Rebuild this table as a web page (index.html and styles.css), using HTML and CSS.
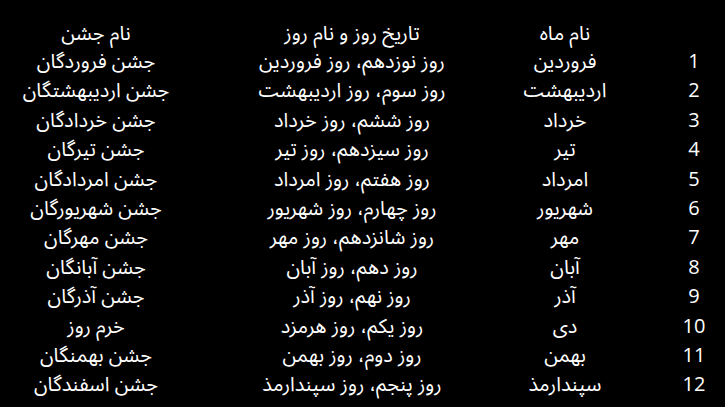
FILE: index.html
```html
<!DOCTYPE html>
<html lang="fa" dir="rtl">
<head>
<meta charset="utf-8">
<link rel="stylesheet" href="styles.css">
</head>
<body>
<div class="table">
  <div class="row head">
    <div class="cell num"></div>
    <div class="cell month">نام ماه</div>
    <div class="cell date">تاریخ روز و نام روز</div>
    <div class="cell fest">نام جشن</div>
  </div>
  <div class="row"><div class="cell num">1</div><div class="cell month">فروردین</div><div class="cell date">روز نوزدهم، روز فروردین</div><div class="cell fest">جشن فروردگان</div></div>
  <div class="row"><div class="cell num">2</div><div class="cell month">اردیبهشت</div><div class="cell date">روز سوم، روز اردیبهشت</div><div class="cell fest">جشن اردیبهشتگان</div></div>
  <div class="row"><div class="cell num">3</div><div class="cell month">خرداد</div><div class="cell date">روز ششم، روز خرداد</div><div class="cell fest">جشن خردادگان</div></div>
  <div class="row"><div class="cell num">4</div><div class="cell month">تیر</div><div class="cell date">روز سیزدهم، روز تیر</div><div class="cell fest">جشن تیرگان</div></div>
  <div class="row"><div class="cell num">5</div><div class="cell month">امرداد</div><div class="cell date">روز هفتم، روز امرداد</div><div class="cell fest">جشن امردادگان</div></div>
  <div class="row"><div class="cell num">6</div><div class="cell month">شهریور</div><div class="cell date">روز چهارم، روز شهریور</div><div class="cell fest">جشن شهریورگان</div></div>
  <div class="row"><div class="cell num">7</div><div class="cell month">مهر</div><div class="cell date">روز شانزدهم، روز مهر</div><div class="cell fest">جشن مهرگان</div></div>
  <div class="row"><div class="cell num">8</div><div class="cell month">آبان</div><div class="cell date">روز دهم، روز آبان</div><div class="cell fest">جشن آبانگان</div></div>
  <div class="row"><div class="cell num">9</div><div class="cell month">آذر</div><div class="cell date">روز نهم، روز آذر</div><div class="cell fest">جشن آذرگان</div></div>
  <div class="row"><div class="cell num">10</div><div class="cell month">دی</div><div class="cell date">روز یکم، روز هرمزد</div><div class="cell fest">خرم روز</div></div>
  <div class="row"><div class="cell num">11</div><div class="cell month">بهمن</div><div class="cell date">روز دوم، روز بهمن</div><div class="cell fest">جشن بهمنگان</div></div>
  <div class="row"><div class="cell num">12</div><div class="cell month">سپندارمذ</div><div class="cell date">روز پنجم، روز سپندارمذ</div><div class="cell fest">جشن اسفندگان</div></div>
</div>
</body>
</html>
```
FILE: styles.css
```css
html, body {
  margin: 0;
  padding: 0;
  background: #000;
  color: #fff;
  overflow: hidden;
}
body {
  width: 725px;
  height: 407px;
  font-family: "Open Sans", "Noto Sans Arabic", "DejaVu Sans", sans-serif;
  font-size: 20px;
}
.table {
  display: flex;
  flex-direction: column;
  padding-top: 20px;
}
.row {
  display: grid;
  grid-template-columns: 62px 196px 230px 237px;
  height: 29.4px;
  line-height: 29.4px;
}
.row.head {
  height: 26px;
  line-height: 26px;
}
.cell {
  text-align: center;
  white-space: nowrap;
}
.fest {
  padding-right: 45px;
}
```
